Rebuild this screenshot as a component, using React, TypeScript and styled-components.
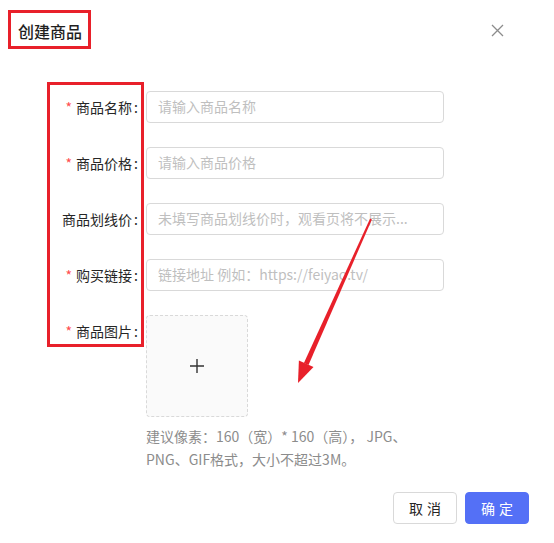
import styled, { createGlobalStyle } from "styled-components";

const GlobalStyle = createGlobalStyle`
  html, body {
    margin: 0;
    padding: 0;
    background: #ffffff;
  }
  body {
    font-family: "Noto Sans CJK SC", "Noto Sans", sans-serif;
    color: #262626;
  }
  * {
    box-sizing: border-box;
  }
`;

const Dialog = styled.div`
  position: relative;
  width: 554px;
  height: 543px;
  display: flex;
  flex-direction: column;
  background: #fff;
`;

const Header = styled.div`
  display: flex;
  align-items: center;
  justify-content: space-between;
  height: 61px;
  padding: 0 45px 0 18px;
`;

const Title = styled.div`
  font-size: 16px;
  font-weight: 500;
  color: #1f1f1f;
  line-height: 22px;
`;

const CloseButton = styled.button`
  display: flex;
  align-items: center;
  justify-content: center;
  width: 20px;
  height: 20px;
  padding: 0;
  margin-right: 2px;
  border: none;
  background: none;
  cursor: pointer;
`;

const Form = styled.div`
  display: flex;
  flex-direction: column;
  gap: 24px;
  padding-top: 30px;
`;

const Row = styled.div<{ $top?: boolean }>`
  display: flex;
  align-items: ${({ $top }) => ($top ? "flex-start" : "center")};
`;

const Label = styled.div`
  width: 146px;
  flex-shrink: 0;
  padding-right: 8px;
  display: flex;
  justify-content: flex-end;
  align-items: center;
  font-size: 14px;
  color: #262626;
  line-height: 32px;
  white-space: nowrap;
`;

const Required = styled.span`
  color: #ff4d4f;
  margin-right: 4px;
  font-size: 14px;
`;

const Colon = styled.span`
  margin-left: 2px;
`;

const Input = styled.input`
  width: 298px;
  height: 32px;
  padding: 0 11px 2px;
  border: 1px solid #d9d9d9;
  border-radius: 4px;
  font-family: inherit;
  font-size: 14px;
  color: #262626;
  outline: none;

  &::placeholder {
    color: #bfbfbf;
  }
`;

const UploadColumn = styled.div`
  display: flex;
  flex-direction: column;
`;

const UploadBox = styled.div`
  width: 102px;
  height: 102px;
  border: 1px dashed #d9d9d9;
  border-radius: 4px;
  background: #fafafa;
  display: flex;
  align-items: center;
  justify-content: center;
`;

const Hint = styled.div`
  margin-top: 8px;
  font-size: 14px;
  line-height: 23px;
  color: #8c8c8c;
`;

const Footer = styled.div`
  margin-top: auto;
  display: flex;
  justify-content: flex-end;
  gap: 8px;
  padding: 0 25px 19px 0;
`;

const Button = styled.button<{ $primary?: boolean }>`
  width: 64px;
  height: 32px;
  padding: 0 0 0 4px;
  border-radius: 4px;
  font-family: inherit;
  font-size: 14px;
  letter-spacing: 4px;
  cursor: pointer;
  border: 1px solid ${({ $primary }) => ($primary ? "#5470f6" : "#d9d9d9")};
  background: ${({ $primary }) => ($primary ? "#5470f6" : "#fff")};
  color: ${({ $primary }) => ($primary ? "#fff" : "#262626")};
`;

const MarkBox = styled.div<{ $l: number; $t: number; $w: number; $h: number }>`
  position: absolute;
  left: ${({ $l }) => $l}px;
  top: ${({ $t }) => $t}px;
  width: ${({ $w }) => $w}px;
  height: ${({ $h }) => $h}px;
  border: 3px solid #e8202a;
  pointer-events: none;
`;

const Overlay = styled.svg`
  position: absolute;
  left: 0;
  top: 0;
  pointer-events: none;
`;

type FieldProps = {
  label: string;
  placeholder: string;
  required?: boolean;
};

const Field = ({ label, placeholder, required }: FieldProps) => (
  <Row>
    <Label>
      {required && <Required>*</Required>}
      {label}
      <Colon>:</Colon>
    </Label>
    <Input placeholder={placeholder} />
  </Row>
);

export default function App() {
  return (
    <>
      <GlobalStyle />
      <Dialog>
        <Header>
          <Title>创建商品</Title>
          <CloseButton aria-label="close">
            <svg width="13" height="13" viewBox="0 0 13 13">
              <path
                d="M1 1 L12 12 M12 1 L1 12"
                stroke="#8c8c8c"
                strokeWidth="1.3"
                fill="none"
              />
            </svg>
          </CloseButton>
        </Header>

        <Form>
          <Field label="商品名称" placeholder="请输入商品名称" required />
          <Field label="商品价格" placeholder="请输入商品价格" required />
          <Field label="商品划线价" placeholder="未填写商品划线价时，观看页将不展示..." />
          <Field
            label="购买链接"
            placeholder="链接地址 例如：https://feiyao.tv/"
            required
          />
          <Row $top>
            <Label>
              <Required>*</Required>
              商品图片
              <Colon>:</Colon>
            </Label>
            <UploadColumn>
              <UploadBox>
                <svg width="14" height="14" viewBox="0 0 14 14">
                  <path
                    d="M7 0 V14 M0 7 H14"
                    stroke="#333"
                    strokeWidth="1.4"
                    fill="none"
                  />
                </svg>
              </UploadBox>
              <Hint>
                建议像素：160（宽）* 160（高）， JPG、
                <br />
                PNG、GIF格式，大小不超过3M。
              </Hint>
            </UploadColumn>
          </Row>
        </Form>

        <Footer>
          <Button>取消</Button>
          <Button $primary>确定</Button>
        </Footer>

        <MarkBox $l={8} $t={10} $w={83} $h={39} />
        <MarkBox $l={47} $t={82} $w={97} $h={265} />
        <Overlay width="554" height="543" viewBox="0 0 554 543">
          <polygon
            points="370.1,218.6 371.9,219.4 308.5,365 303.9,362.9"
            fill="#e8202a"
          />
          <polygon points="298,383 298.9,360.4 313.5,367" fill="#e8202a" />
        </Overlay>
      </Dialog>
    </>
  );
}
